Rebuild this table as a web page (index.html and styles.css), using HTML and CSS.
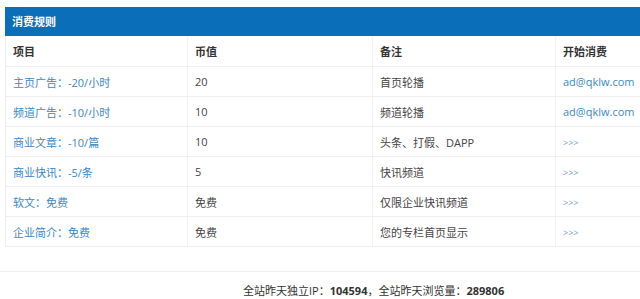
FILE: index.html
```html
<!DOCTYPE html>
<html lang="zh-CN">
<head>
<meta charset="utf-8">
<title>消费规则</title>
<link rel="stylesheet" href="styles.css">
</head>
<body>
<div class="wrap">
  <div class="panel">
    <div class="title">消费规则</div>
    <table class="rules">
      <colgroup>
        <col class="c1"><col class="c2"><col class="c3"><col class="c4">
      </colgroup>
      <thead>
        <tr><th>项目</th><th>币值</th><th>备注</th><th>开始消费</th></tr>
      </thead>
      <tbody>
        <tr><td><a href="#">主页广告：-20/小时</a></td><td>20</td><td>首页轮播</td><td><a href="#">ad@qklw.com</a></td></tr>
        <tr><td><a href="#">频道广告：-10/小时</a></td><td>10</td><td>频道轮播</td><td><a href="#">ad@qklw.com</a></td></tr>
        <tr><td><a href="#">商业文章：-10/篇</a></td><td>10</td><td>头条、打假、DAPP</td><td><a href="#" class="more">&gt;&gt;&gt;</a></td></tr>
        <tr><td><a href="#">商业快讯：-5/条</a></td><td>5</td><td>快讯频道</td><td><a href="#" class="more">&gt;&gt;&gt;</a></td></tr>
        <tr><td><a href="#">软文：免费</a></td><td>免费</td><td>仅限企业快讯频道</td><td><a href="#" class="more">&gt;&gt;&gt;</a></td></tr>
        <tr><td><a href="#">企业简介：免费</a></td><td>免费</td><td>您的专栏首页显示</td><td><a href="#" class="more">&gt;&gt;&gt;</a></td></tr>
      </tbody>
    </table>
  </div>
  <div class="footer">
    <p class="stats">全站昨天独立IP：<b>104594</b>，全站昨天浏览量：<b>289806</b></p>
  </div>
</div>
</body>
</html>
```

FILE: styles.css
```css
html, body {
  margin: 0;
  padding: 0;
  background: #fff;
}
body {
  font-family: "Open Sans", "Noto Sans CJK SC", sans-serif;
  font-size: 11px;
  color: #444;
  text-spacing-trim: space-all;
}
.panel {
  margin: 7px 0 0 5px;
}
.title {
  height: 29px;
  line-height: 29px;
  background: #0b6eb8;
  color: #fff;
  font-weight: bold;
  padding-left: 7px;
  font-family: "Noto Sans CJK SC", sans-serif;
}
.rules {
  width: 100%;
  border-collapse: collapse;
  table-layout: fixed;
  border-left: 1px solid #eee;
}
.c1 { width: 182px; }
.c2 { width: 185px; }
.c3 { width: 183px; }
.c4 { width: auto; }
.rules th, .rules td {
  text-align: left;
  padding: 0 0 0 7px;
  border-bottom: 1px solid #eee;
  border-right: 1px solid #f2f2f2;
  white-space: nowrap;
  overflow: hidden;
}
.rules th:last-child, .rules td:last-child { border-right: none; }
.rules th {
  height: 30px;
  font-weight: bold;
  color: #333;
  font-family: "Noto Sans CJK SC", sans-serif;
}
.rules td {
  height: 29px;
}
.rules a {
  color: #3a88c6;
  text-decoration: none;
}
.rules a.more {
  font-size: 9px;
  color: #6a9fcc;
}
.footer {
  margin-top: 24px;
  border-top: 1px solid #eee;
}
.stats {
  margin: 0;
  padding: 10px 0 0 243px;
  color: #333;
  line-height: 18px;
}
.stats b {
  font-weight: bold;
}
```
